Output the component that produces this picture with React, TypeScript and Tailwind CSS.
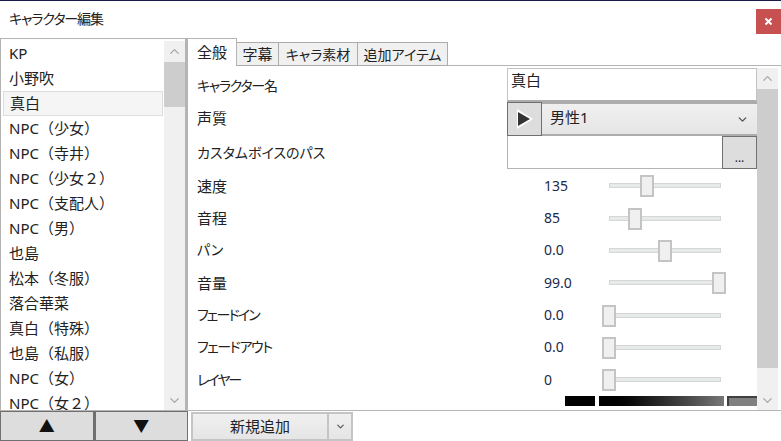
import { ChevronDown, ChevronUp } from 'lucide-react'

const characters = ['KP', '小野吹', '真白', 'NPC（少女）', 'NPC（寺井）', 'NPC（少女２）', 'NPC（支配人）', 'NPC（男）', '也島', '松本（冬服）', '落合華菜', '真白（特殊）', '也島（私服）', 'NPC（女）', 'NPC（女２）']

const sliders = [
  { label: '速度', value: '135', left: 30, h: 'h-[33px]', size: 'text-[15px]' },
  { label: '音程', value: '85', left: 18, h: 'h-[32px]', size: 'text-[15px]' },
  { label: 'パン', value: '0.0', left: 48, h: 'h-[32px]', size: 'text-[14px]' },
  { label: '音量', value: '99.0', left: 102, h: 'h-[33px]', size: 'text-[15px]' },
  { label: 'フェードイン', value: '0.0', left: -8, h: 'h-[32px]', size: 'text-[14px] tracking-[-1.8px]' },
  { label: 'フェードアウト', value: '0.0', left: -8, h: 'h-[32px]', size: 'text-[14px] tracking-[-1.4px]' },
  { label: 'レイヤー', value: '0', left: -8, h: 'h-[33px]', size: 'text-[14px] tracking-[-2px]' },
]

function ScrollBar({ thumbHeight }: { thumbHeight: string }) {
  return (
    <div className="w-[21px] shrink-0 flex flex-col bg-[#f0f0f0]">
      <div className="h-[21px] flex items-center justify-center text-[#a6a6a6]">
        <ChevronUp size={15} strokeWidth={2} />
      </div>
      <div className={`${thumbHeight} bg-[#cdcdcd]`} />
      <div className="flex-1" />
      <div className="h-[20px] flex items-center justify-center text-[#a6a6a6]">
        <ChevronDown size={15} strokeWidth={2} />
      </div>
    </div>
  )
}

function Slider({ left }: { left: number }) {
  return (
    <div className="relative w-[112px] h-[5px] bg-[#e7eaea] border border-[#d6d6d6]">
      <div
        className="absolute top-[-9px] w-[14px] h-[22px] bg-[#f0f0f0] border-2 border-[#c4c4c4]"
        style={{ left }}
      />
    </div>
  )
}

export default function App() {
  return (
    <div className="w-[781px] h-[441px] overflow-hidden flex flex-col bg-white text-[15px] text-[#222222] [font-feature-settings:'palt'] font-['Noto_Sans','Noto_Sans_CJK_JP',sans-serif]">
      <div className="h-px bg-[#1b1b4b]" />
      <div className="h-[37px] flex justify-between items-start">
        <div className="pl-[9px] pt-[8px] text-[14px] tracking-[-1.1px] leading-[20px]">キャラクター編集</div>
        <div className="mt-[8px] w-[25px] h-[25px] bg-[#c75050] flex items-center justify-center">
          <svg width="9" height="9" viewBox="0 0 9 9">
            <path d="M1.5 1.5 L7.5 7.5 M7.5 1.5 L1.5 7.5" stroke="#fff" strokeWidth="2" />
          </svg>
        </div>
      </div>

      <div className="flex-1 min-h-0 flex">
        <div className="w-[188px] shrink-0 flex border-t border-l border-r-[3px] border-[#b4b4b4] pt-[2px]">
          <div className="flex-1 min-w-0 overflow-hidden pl-[2px] pr-px [font-feature-settings:normal]">
            {characters.map((name) => (
              <div
                key={name}
                className={`h-[25px] flex items-center pl-[6px] shrink-0 leading-none ${name === '真白' ? 'bg-[#f5f5f5] border border-[#dcdcdc] pl-[5px]' : ''}`}
              >
                {name}
              </div>
            ))}
          </div>
          <ScrollBar thumbHeight="h-[45px]" />
        </div>

        <div className="flex-1 min-w-0 flex flex-col">
          <div className="h-[28px] flex items-end shrink-0">
            <div className="w-[49px] h-[28px] flex items-center justify-center bg-white border-t border-r border-[#b4b4b4]">全般</div>
            {['字幕', 'キャラ素材', '追加アイテム'].map((tab, i) => (
              <div
                key={tab}
                className={`h-[24px] flex items-center justify-center bg-[#f0f0f0] border-t border-r border-b border-[#acacac] ${i === 0 ? 'w-[42px] text-[15px]' : i === 1 ? 'w-[79px] text-[14px]' : 'w-[90px] text-[14px]'}`}
              >
                {tab}
              </div>
            ))}
            <div className="flex-1 border-b border-[#b4b4b4]" />
          </div>

          <div className="flex-1 min-h-0 flex pl-[9px] pr-[3px] pt-[2px]">
            <div className="flex-1 min-w-0 overflow-hidden">
              <div className="h-[34px] flex">
                <div className="w-[310px] pt-[8px] leading-[20px] text-[14px] tracking-[-1.3px]">キャラクター名</div>
                <div className="flex-1 border border-[#c4c4c4] border-b-2 border-b-[#acacac] pl-[3px] pt-px leading-[20px]">真白</div>
              </div>
              <div className="h-[34px] flex">
                <div className="w-[310px] pt-[6px] leading-[20px]">声質</div>
                <div className="w-[35px] h-[34px] bg-[#dddddd] border-[1.5px] border-[#707070] flex items-center justify-center">
                  <svg width="18" height="20" viewBox="0 0 18 20">
                    <path d="M1 0 L17 10 L1 20 Z" fill="#fff" />
                    <path d="M2 3 L14 10 L2 17 Z" fill="#333" />
                  </svg>
                </div>
                <div className="flex-1 flex items-center justify-between px-[8px] bg-gradient-to-b from-[#f0f0f0] to-[#e5e5e5] border-y-2 border-[#acacac]">
                  <span className="leading-none pb-[4px]">男性1</span>
                  <ChevronDown size={13} strokeWidth={2.5} className="text-[#555]" />
                </div>
              </div>
              <div className="h-[33px] flex">
                <div className="w-[310px] pt-[7px] leading-[20px] text-[14px]">カスタムボイスのパス</div>
                <div className="flex-1 border-l border-b border-[#b4b4b4]" />
                <div className="w-[35px] bg-[#dddddd] border-[1.5px] border-[#707070] flex items-end justify-center text-[12px] leading-[20px]">...</div>
              </div>
              {sliders.map((s) => (
                <div key={s.label} className={`${s.h} flex items-center`}>
                  <div className={`w-[347px] leading-[20px] ${s.size}`}>{s.label}</div>
                  <div className="w-[65px] leading-[20px] text-[14px] text-[#1a2a4a]">{s.value}</div>
                  <Slider left={s.left} />
                </div>
              ))}
              <div className="h-[10px] flex items-stretch pl-[368px]">
                <div className="w-[30px] bg-black" />
                <div className="w-[125px] ml-[4px] bg-gradient-to-r from-black to-[#777777]" />
                <div className="w-[30px] ml-[3px] bg-[#808080] border-t-2 border-l-2 border-[#404040]" />
              </div>
            </div>
            <ScrollBar thumbHeight="h-[279px]" />
          </div>
        </div>
      </div>

      <div className="h-[31px] shrink-0 flex border-t border-[#b4b4b4]">
        <div className="w-[188px] flex shrink-0">
          <div className="flex-1 bg-[#dddddd] border border-[#707070] flex items-center justify-center text-[#111] text-[16px]">▲</div>
          <div className="flex-1 bg-[#dddddd] border border-l-2 border-[#707070] flex items-center justify-center text-[#111] text-[16px]">▼</div>
        </div>
        <div className="ml-[3px] mt-px flex h-[29px]">
          <div className="w-[138px] flex items-center justify-center bg-gradient-to-b from-[#f0f0f0] to-[#e5e5e5] border-2 border-[#c4c4c4]">新規追加</div>
          <div className="w-[24px] flex items-center justify-center bg-gradient-to-b from-[#f0f0f0] to-[#e5e5e5] border-2 border-l-0 border-[#c4c4c4]">
            <ChevronDown size={11} strokeWidth={2.5} className="text-[#555]" />
          </div>
        </div>
      </div>
    </div>
  )
}
